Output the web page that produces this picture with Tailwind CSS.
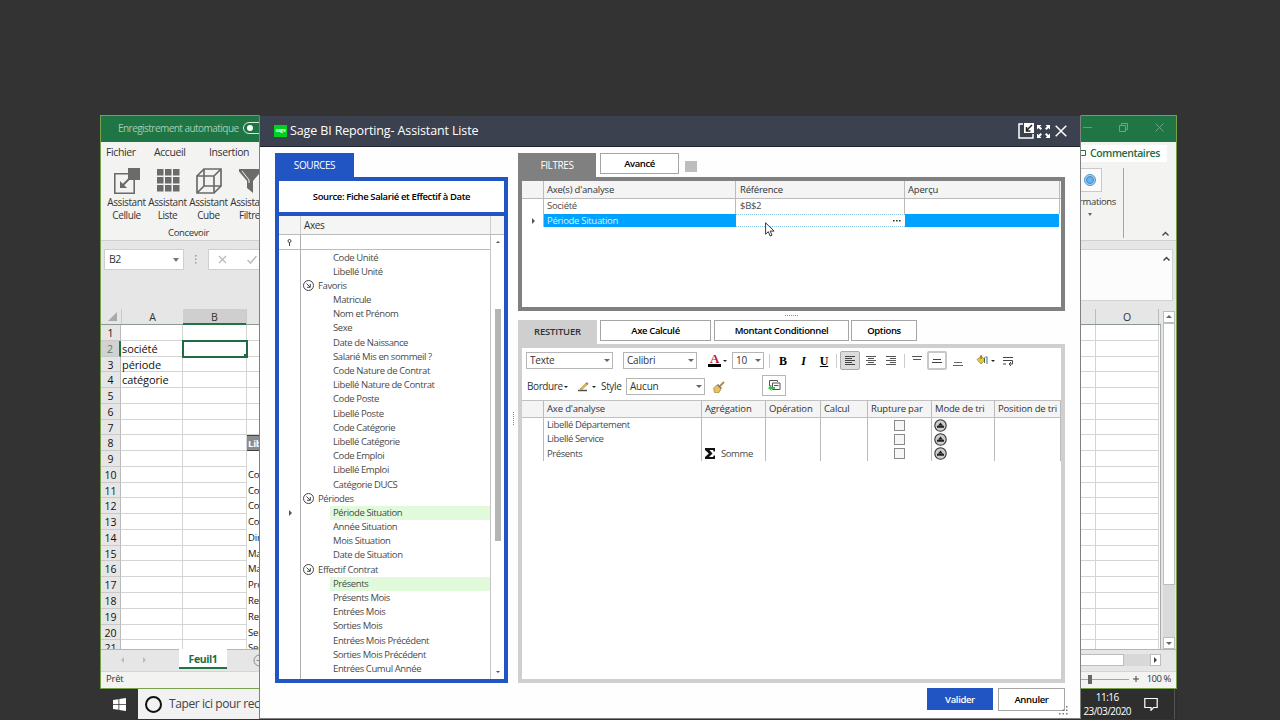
<!DOCTYPE html>
<html lang="fr">
<head>
    <meta charset="UTF-8">
    <meta name="viewport" content="width=device-width, initial-scale=1.0">
    <title>Sage BI Reporting - Assistant Liste</title>
    <script src="https://cdn.jsdelivr.net/npm/@tailwindcss/browser@4"></script>
</head>
<body class="relative w-[1280px] h-[720px] overflow-hidden bg-[#333333] font-['Open_Sans','Noto_Sans',sans-serif] text-[#333]">

    <!-- Excel window -->
    <div class="absolute left-[100px] top-[115px] w-[1077px] h-[574px] flex flex-col border border-[#79a04c] bg-[#e6e6e6] overflow-hidden">
        <!-- Title bar -->
        <div class="h-[26px] shrink-0 bg-[#1f7544] flex items-center justify-between pl-[17px] pr-[12px] pb-[3px] text-[#a5ccb3]">
            <div class="flex items-center gap-[5px]">
                <span class="w-[120px] text-[10px] tracking-[-0.54px] leading-none whitespace-nowrap">Enregistrement automatique</span>
                <span class="w-[26px] h-[12px] rounded-full border border-[#d5e8dc] flex items-center pl-[3px]"><span class="w-[6px] h-[6px] rounded-full bg-white"></span></span>
            </div>
            <div class="flex items-center gap-[27px]">
                <svg class="w-[9px] h-[9px]" viewBox="0 0 9 9" stroke="#5f9f79" fill="none"><path d="M0 4.500h9"/></svg>
                <svg class="w-[9px] h-[9px]" viewBox="0 0 9 9" stroke="#6aa884" fill="none"><path d="M.5 2.500h6v6h-6zM2.500 2.500v-2h6v6h-2"/></svg>
                <svg class="w-[9px] h-[9px]" viewBox="0 0 9 9" stroke="#6aa884" fill="none"><path d="M.5.5l8 8M8.500.5l-8 8"/></svg>
            </div>
        </div>
        <!-- Ribbon -->
        <div class="h-[99px] shrink-0 bg-[#f3f3f2] border-b border-[#cfcfcf] flex justify-between">
            <div class="flex flex-col">
                <div class="flex h-[25px] items-center pl-[5px] text-[10.5px] tracking-[-0.4px]">
                    <span class="w-[48px]">Fichier</span><span class="w-[55px]">Accueil</span><span>Insertion</span>
                </div>
                <div class="flex pt-[4px] pl-[5px] text-center text-[10px] leading-[12.5px] tracking-[-0.4px]">
                    <div class="w-[41px] flex flex-col items-center">
                        <svg class="w-[26px] h-[26px]" viewBox="0 0 26 26"><path d="M.8 5.800h19.400v19.400H.8z" fill="none" stroke="#6b6b6b" stroke-width="1.600"/><path d="M14 0h12v12H14z" fill="#6b6b6b"/><path d="M17 9L8 18" stroke="#6b6b6b" stroke-width="2"/><path d="M6 20v-7l7 7z" fill="#6b6b6b"/></svg>
                        <span class="mt-[2px] whitespace-nowrap">Assistant<br>Cellule</span>
                    </div>
                    <div class="w-[41px] flex flex-col items-center">
                        <svg class="w-[26px] h-[26px]" viewBox="0 0 26 26" fill="#6b6b6b"><path d="M2 1h6.500v6.500H2zM10 1h6.500v6.500H10zM18 1h6.500v6.500H18zM2 9h6.500v6.500H2zM10 9h6.500v6.500H10zM18 9h6.500v6.500H18zM2 17h6.500v6.500H2zM10 17h6.500v6.500H10zM18 17h6.500v6.500H18z"/></svg>
                        <span class="mt-[2px] whitespace-nowrap">Assistant<br>Liste</span>
                    </div>
                    <div class="w-[41px] flex flex-col items-center">
                        <svg class="w-[26px] h-[26px]" viewBox="0 0 26 26" fill="none" stroke="#6b6b6b" stroke-width="1.700"><path d="M1 8h17v17H1zM8 1h17v17H8zM1 8l7-7M18 8l7-7M1 25l7-7M18 25l7-7"/></svg>
                        <span class="mt-[2px] whitespace-nowrap">Assistant<br>Cube</span>
                    </div>
                    <div class="w-[41px] flex flex-col items-center">
                        <svg class="w-[26px] h-[26px]" viewBox="0 0 26 26" fill="#6b6b6b"><path d="M2 1h22v2.500L16 13v12l-6-5v-7L2 3.500z"/><path d="M5 3l7 9v3" stroke="#f3f3f2" fill="none"/></svg>
                        <span class="mt-[2px] whitespace-nowrap">Assistant<br>Filtre</span>
                    </div>
                </div>
                <span class="pl-[67px] mt-[5px] text-[9.5px] leading-[14px] tracking-[-0.35px]">Concevoir</span>
            </div>
            <div class="w-[96px] flex flex-col">
                <div class="w-[87px] h-[17px] mt-[3px] bg-white flex items-center gap-[3px]">
                    <svg class="w-[7px] h-[9px] shrink-0" viewBox="1 0 7 9" fill="none" stroke="#217346"><path d="M0 1.500h6.500v5h-4l-2 2"/></svg>
                    <span class="text-[10.5px] font-semibold tracking-[-0.4px] text-[#1f6b43]">Commentaires</span>
                </div>
                <div class="flex">
                    <div class="w-[44px] h-[70px] mt-[6px] border-r border-[#a5a5a5] flex flex-col">
                        <div class="w-[22px] h-[24px] bg-[#fbfbfb] border border-l-0 border-[#c8c8c8] flex items-center justify-center">
                            <svg class="w-[14px] h-[14px]" viewBox="0 0 14 14"><circle cx="6" cy="7" r="5.500" fill="#a9d3f5" stroke="#4b97d2"/><circle cx="6" cy="7" r="3.500" fill="#67b3ef" stroke="#4586bb"/></svg>
                        </div>
                        <span class="text-[9.5px] leading-[14px] mt-[3px] -ml-[1px] tracking-[-0.35px]">rmations</span>
                        <span class="border-x-[2.5px] border-x-transparent border-t-[3px] border-t-[#666] w-0 ml-[8px] mt-[4px]"></span>
                    </div>
                    <svg class="w-[7px] h-[5px] mt-[69px] ml-[38px]" viewBox="0 0 7 5" fill="none" stroke="#444" stroke-width="1.300"><path d="M.5 4.500l3-3 3 3"/></svg>
                </div>
            </div>
        </div>
        <!-- Formula bar -->
        <div class="h-[68px] shrink-0 flex pt-[8px] pl-[3px] pr-[3px]">
            <div class="w-[80px] h-[21px] bg-white border border-[#cfcfcf] flex items-center justify-between px-[4px] text-[10.5px]">
                <span class="tracking-[-0.5px]">B2</span>
                <span class="border-x-[3px] border-x-transparent border-t-[4px] border-t-[#777]"></span>
            </div>
            <div class="w-[24px] h-[21px] flex items-center justify-center"><svg class="w-[2px] h-[9px]" viewBox="0 0 2 9" fill="#999"><path d="M0 0h1.500v1.500H0zM0 3.500h1.500V5H0zM0 7h1.500v1.500H0z"/></svg></div>
            <div class="w-[180px] h-[21px] bg-white border border-[#cfcfcf] flex items-center gap-[20px] pl-[9px]">
                <svg class="w-[9px] h-[9px]" viewBox="0 0 9 9" stroke="#bbb" stroke-width="1.300"><path d="M1 1l7 7M8 1l-7 7"/></svg>
                <svg class="w-[10px] h-[9px]" viewBox="0 0 10 9" stroke="#bbb" stroke-width="1.500" fill="none"><path d="M.5 5l3 3L9.500 1"/></svg>
            </div>
            <div class="ml-auto w-[200px] h-[52px] bg-[#fcfcfc] border border-[#d2d2d2] flex justify-end pr-[2px] pt-[6px]">
                <svg class="w-[7px] h-[5px]" viewBox="0 0 7 5" fill="none" stroke="#444" stroke-width="1.500"><path d="M.5 4.500l3-3 3 3"/></svg>
            </div>
        </div>
        <!-- Sheet -->
        <div class="h-[340px] shrink-0 flex">
            <div class="w-[1060px] flex flex-col overflow-hidden">
                <div class="h-[16px] shrink-0 flex border-b border-[#8a9a90] text-[10.5px] text-center leading-[16px]">
                    <div class="w-[20px] flex items-end justify-end pb-[3px] pr-[4px]"><svg class="w-[9px] h-[9px]" viewBox="0 0 9 9" fill="#aaa"><path d="M9 0v9H0z"/></svg></div>
                    <div class="w-[62px] border-l border-[#c9c9c9]">A</div>
                    <div class="w-[63px] h-[16px] bg-[#cfcfcf] border-b-2 border-[#217346]">B</div>
                    <div class="w-[849px] border-l border-[#c9c9c9]"></div>
                    <div class="w-[64px] border-x border-[#bbb]">O</div>
                </div>
                <div id="sheet" class="flex flex-col bg-white border-r border-[#aaa]"></div>
            </div>
            <div class="w-[15px] flex flex-col items-center pt-[2px]">
                <div class="w-[12px] h-[12px] bg-white border border-[#bdbdbd] flex items-center justify-center"><span class="border-x-[3px] border-x-transparent border-b-[3px] border-b-[#666]"></span></div>
                <div class="w-[12px] h-[263px] bg-white border border-[#bdbdbd]"></div>
                <div class="w-[12px] h-[52px] bg-[#dadada]"></div>
                <div class="w-[12px] h-[12px] bg-white border border-[#bdbdbd] flex items-center justify-center"><span class="border-x-[3px] border-x-transparent border-t-[3px] border-t-[#666]"></span></div>
            </div>
        </div>
        <!-- Sheet tabs -->
        <div class="h-[22px] shrink-0 flex items-start border-t border-[#b5b5b5] bg-[#e6e6e6]">
            <div class="w-[78px] h-[20px] flex items-center pl-[20px] gap-[19px]">
                <span class="border-y-[3px] border-y-transparent border-r-[3px] border-r-[#bbb]"></span>
                <span class="border-y-[3px] border-y-transparent border-l-[3px] border-l-[#bbb]"></span>
            </div>
            <div class="w-[48px] h-[20px] -mt-px bg-white border-b-2 border-[#217346] text-center text-[10.5px] leading-[20px] font-bold tracking-[-0.4px] text-[#1f6b43]">Feuil1</div>
            <svg class="w-[13px] h-[13px] ml-[26px] mt-[4px]" viewBox="0 0 13 13" fill="none" stroke="#888"><circle cx="6.500" cy="6.500" r="5.500"/><path d="M6.500 3.500v6M3.500 6.500h6"/></svg>
            <div class="ml-auto mr-[15px] mt-[4px] h-[12px] flex">
                <div class="w-[143px] bg-white border border-[#bdbdbd]"></div>
                <div class="w-[26px] bg-[#d8d8d8]"></div>
                <div class="w-[11px] bg-white border border-[#bdbdbd] flex items-center justify-center"><span class="border-y-[3px] border-y-transparent border-l-[3px] border-l-[#444]"></span></div>
            </div>
        </div>
        <!-- Status bar -->
        <div class="grow bg-[#f3f3f2] border-t border-[#d4d4d4] flex items-center justify-between pl-[5px] pr-[5px] pb-[2px] text-[9.5px]">
            <span class="tracking-[-0.2px]">Prêt</span>
            <div class="flex items-center">
                <div class="w-[60px] h-px bg-[#a5a5a5] flex items-center"><span class="w-[4px] h-[9px] ml-[19px] bg-[#666]"></span></div>
                <svg class="w-[6px] h-[6px] ml-[4px]" viewBox="0 0 6 6" stroke="#444"><path d="M3 0v6M0 3h6"/></svg>
                <span class="ml-[8px] tracking-[-0.45px]">100 %</span>
            </div>
        </div>
    </div>

    <!-- Windows taskbar -->
    <div class="absolute left-[100px] top-[689px] w-[1077px] h-[30px] bg-[#2e2e2e] flex justify-between">
        <div class="flex">
            <div class="w-[38px] bg-[#333] flex items-center justify-center">
                <svg class="w-[13px] h-[13px]" viewBox="0 0 13 13" fill="#fff"><path d="M0 2l5.500-.8V6H0zM6.300 1L13 0v6H6.300zM0 6.800h5.500v4.900L0 11zM6.300 6.800H13V13l-6.700-1z"/></svg>
            </div>
            <div class="w-[200px] bg-[#f2f2f2] flex items-center pl-[7px] gap-[7px]">
                <span class="w-[17px] h-[17px] rounded-full border-[2.5px] border-[#111]"></span>
                <span class="text-[12px] tracking-[-0.4px] whitespace-nowrap text-[#444]">Taper ici pour rechercher</span>
            </div>
        </div>
        <div class="flex items-center pr-[2px] text-white">
            <div class="text-[10px] leading-[14px] text-center tracking-[-0.55px]">11:16<br>23/03/2020</div>
            <svg class="w-[14px] h-[14px] ml-[13px] mr-[16px]" viewBox="0 0 14 14" fill="none" stroke="#fff" stroke-width="1.200"><path d="M.8 1.500h12.400v9H9.500l-2.500 2.800v-2.800H.8z"/></svg>
            <span class="w-px h-full bg-[#555]"></span>
        </div>
    </div>

    <!-- Assistant dialog -->
    <div class="absolute left-[259px] top-[115px] w-[822px] h-[604px] flex flex-col border border-[#808080] border-t-[#333] bg-[#fefefe]">
        <div class="h-[31px] shrink-0 bg-[#3b414f] border-b border-[#20222c] flex items-center pl-[14px] pr-[13px] text-white">
            <span class="w-[13px] h-[12px] bg-[#00d01f] text-[5px] leading-[10px] text-center font-semibold tracking-[-0.2px]">sage</span>
            <span class="ml-[3px] text-[12.5px] leading-none tracking-[-0.13px]">Sage BI Reporting- Assistant Liste</span>
            <div class="ml-auto flex items-center gap-[2px]">
                <svg class="w-[16px] h-[16px]" viewBox="0 0 16 16"><path d="M5 1H1v14h14v-4" fill="none" stroke="#fff" stroke-width="1.500"/><path d="M6 0h10v10H6z" fill="#fff"/><path d="M14 2L9 7M8.500 4v4h4" fill="none" stroke="#222" stroke-width="1.500"/></svg>
                <svg class="w-[15px] h-[15px]" viewBox="0 0 15 15" fill="#fff"><path d="M1 1h4.500L4 2.500l2 2L4.500 6l-2-2L1 5.500zM14 1H9.500L11 2.500l-2 2L10.500 6l2-2L14 5.500zM1 14h4.500L4 12.500l2-2L4.500 9l-2 2L1 9.500zM14 14H9.500l1.500-1.500-2-2L10.500 9l2 2L14 9.500z"/></svg>
                <svg class="w-[12px] h-[12px] ml-[2px]" viewBox="0 0 12 12" stroke="#fff" stroke-width="1.500"><path d="M.7.7l10.600 10.600M11.300.7L.7 11.300"/></svg>
            </div>
        </div>

        <div class="flex pt-[6px] pl-[15px] pr-[15px]">
            <!-- Sources -->
            <div class="w-[233px] flex flex-col">
                <div class="w-[79px] h-[24px] bg-[#2255c4] text-white text-center text-[10px] leading-[24px] tracking-[-0.4px]">SOURCES</div>
                <div class="h-[506px] border-4 border-[#2255c4] bg-[#2255c4] flex flex-col gap-[4px]">
                    <div class="h-[31px] shrink-0 bg-white text-black text-center text-[9.5px] leading-[31px] font-semibold tracking-[-0.38px]">Source: Fiche Salarié et Effectif à Date</div>
                    <div class="h-[463px] bg-white flex flex-col">
                        <div class="h-[19px] shrink-0 bg-[#f5f5f6] border-b border-[#bbb] flex text-[10px] leading-[18px]">
                            <span class="w-[22px] border-r border-[#ccc]"></span>
                            <span class="w-[190px] pl-[3px] border-r border-[#ccc] tracking-[-0.4px]">Axes</span>
                        </div>
                        <div class="flex grow">
                            <div class="w-[22px] border-r border-[#b0b0b0] flex flex-col items-center">
                                <div class="h-[15px] w-full border-b border-[#bbb] flex items-center justify-center"><svg class="w-[5px] h-[7px]" viewBox="0 0 5 7"><circle cx="2.500" cy="2" r="1.500" fill="none" stroke="#444"/><path d="M2.500 3.500V7" stroke="#444"/></svg></div>
                                <span class="mt-[260px] ml-[2px] border-y-[3px] border-y-transparent border-l-[3px] border-l-[#555]"></span>
                            </div>
                            <div class="w-[190px] border-r border-[#c5c5c5]">
                                <div class="h-[15px] border-b border-[#bbb]"></div>
                                <div id="axes" class="pt-[0.5px] text-[9.5px] leading-[14px] tracking-[-0.4px] text-[#4a4a4a]"></div>
                            </div>
                            <div class="grow flex flex-col items-center justify-between py-[6px]">
                                <span class="border-x-[2px] border-x-transparent border-b-[2px] border-b-[#555]"></span>
                                <span class="w-[6px] h-[232px] mb-[64px] bg-[#b5b5b5]"></span>
                                <span class="border-x-[2px] border-x-transparent border-t-[2px] border-t-[#555]"></span>
                            </div>
                        </div>
                    </div>
                </div>
            </div>

            <div class="w-[10px] flex justify-center"><span class="mt-[259px] h-[13px] border-l border-dotted border-[#888]"></span></div>

            <div class="w-[547px] flex flex-col">
                <!-- Filtres -->
                <div class="h-[24px] flex text-[10px] tracking-[-0.4px] text-center">
                    <div class="w-[78px] bg-[#808080] text-white leading-[24px]">FILTRES</div>
                    <div class="w-[79px] h-[21px] ml-[4px] border border-[#a5a5a5] bg-white text-black font-semibold leading-[19px] text-[9.5px]">Avancé</div>
                    <div class="w-[12px] h-[11px] ml-[6px] mt-[8px] bg-[#bdbdbd]"></div>
                </div>
                <div class="h-[134px] shrink-0 border-4 border-[#808080] bg-white text-[9.5px] tracking-[-0.3px]">
                    <div class="h-[18px] bg-[#f4f4f4] border-b border-[#bbb] flex leading-[17px] text-[#333] tracking-[-0.2px]">
                        <span class="w-[22px] border-r border-[#bbb]"></span>
                        <span class="w-[192px] pl-[3px] border-r border-[#bbb]">Axe(s) d'analyse</span>
                        <span class="w-[169px] pl-[4px] border-r border-[#bbb]">Référence</span>
                        <span class="w-[155px] pl-[3px] border-r border-[#bbb]">Aperçu</span>
                    </div>
                    <div class="h-[15px] flex leading-[14px] text-[#4a4a4a]">
                        <span class="w-[22px] border-r border-[#bbb]"></span>
                        <span class="w-[192px] pl-[3px] border-r border-[#bbb]">Société</span>
                        <span class="w-[169px] pl-[4px] border-r border-[#bbb]">$B$2</span>
                        <span class="w-[155px] border-r border-[#bbb]"></span>
                    </div>
                    <div class="h-[13px] flex leading-[13px] text-[#d8f0ff]">
                        <span class="w-[22px] border-r border-[#bbb] flex items-center justify-center pl-[2px]"><span class="border-y-[3px] border-y-transparent border-l-[3px] border-l-[#555]"></span></span>
                        <span class="w-[192px] pl-[3px] bg-[#00a2ff]">Période Situation</span>
                        <span class="w-[169px] border-y border-dotted border-[#8cc4e6] flex items-center justify-end pr-[4px]"><svg class="w-[8px] h-[2px]" viewBox="0 0 8 2" fill="#333"><path d="M0 0h1.600v1.600H0zM3 0h1.600v1.600H3zM6 0h1.600v1.600H6z"/></svg></span>
                        <span class="w-[154px] bg-[#00a2ff]"></span>
                    </div>
                </div>
                <div class="h-[9px] shrink-0 flex justify-center"><span class="mt-[4px] w-[13px] border-t border-dotted border-[#888]"></span></div>

                <!-- Restituer -->
                <div class="h-[24px] flex gap-[3px] text-[9.5px] leading-[19px] tracking-[-0.36px] text-center text-black font-semibold">
                    <div class="w-[79px] bg-[#cfcfcf] leading-[24px] text-[#333] tracking-[-0.2px]">RESTITUER</div>
                    <div class="w-[111px] h-[21px] border border-[#a5a5a5] bg-white">Axe Calculé</div>
                    <div class="w-[135px] h-[21px] border border-[#a5a5a5] bg-white">Montant Conditionnel</div>
                    <div class="w-[66px] h-[21px] -ml-px border border-[#a5a5a5] bg-white">Options</div>
                </div>
                <div class="h-[339px] shrink-0 border-4 border-[#cfcfcf] bg-white text-[10px] tracking-[-0.2px]">
                    <div class="h-[25px] flex items-center pl-[4px]">
                        <div class="w-[87px] h-[17px] border border-[#b5b5b5] flex items-center justify-between pl-[3px] pr-[2px]">Texte<span class="border-x-[3px] border-x-transparent border-t-[3px] border-t-[#666]"></span></div>
                        <div class="w-[74px] h-[17px] ml-[10px] border border-[#b5b5b5] flex items-center justify-between pl-[3px] pr-[2px]">Calibri<span class="border-x-[3px] border-x-transparent border-t-[3px] border-t-[#666]"></span></div>
                        <div class="w-[13px] ml-[11px] border-b-[3px] border-black text-center font-['Liberation_Serif',serif] font-bold text-[13px] leading-[10px] text-[#b02a3a]">A</div>
                        <span class="ml-[2px] border-x-[2px] border-x-transparent border-t-[2px] border-t-[#222]"></span>
                        <div class="w-[32px] h-[17px] ml-[5px] border border-[#b5b5b5] flex items-center justify-between pl-[3px] pr-[2px]">10<span class="border-x-[3px] border-x-transparent border-t-[3px] border-t-[#666]"></span></div>
                        <span class="w-px h-[14px] ml-[5px] bg-[#ccc]"></span>
                        <div class="flex ml-[3px] text-center font-['Liberation_Serif',serif] font-bold text-[12px] text-black">
                            <span class="w-[20px]">B</span><span class="w-[21px] italic">I</span><span class="w-[20px] underline">U</span>
                        </div>
                        <span class="w-px h-[14px] ml-[2px] bg-[#ccc]"></span>
                        <span class="w-[20px] h-[19px] ml-[3px] rounded-[2px] border border-[#aaa] bg-[#dcdcdc] flex items-center justify-center"><svg class="w-[10px] h-[9px]" viewBox="0 0 10 9" stroke="#444"><path d="M0 .5h10M0 2.500h7M0 4.500h10M0 6.500h7M0 8.500h10"/></svg></span>
                        <svg class="w-[10px] h-[9px] ml-[6px]" viewBox="0 0 10 9" stroke="#555"><path d="M0 .5h10M2 2.500h6M0 4.500h10M2 6.500h6M0 8.500h10"/></svg>
                        <svg class="w-[10px] h-[9px] ml-[10px]" viewBox="0 0 10 9" stroke="#555"><path d="M0 .5h10M4 2.500h6M0 4.500h10M4 6.500h6M0 8.500h10"/></svg>
                        <span class="w-px h-[14px] ml-[8px] bg-[#ccc]"></span>
                        <svg class="w-[10px] h-[4px] ml-[7px] mb-[6px]" viewBox="0 0 10 4" stroke="#555"><path d="M0 .5h10M1 3.500h8"/></svg>
                        <span class="w-[20px] h-[19px] ml-[5px] rounded-[2px] border-2 border-[#c8c8c8] bg-white flex items-center justify-center"><svg class="w-[10px] h-[4px]" viewBox="0 0 10 4" stroke="#444"><path d="M1 .5h8M0 3.500h10"/></svg></span>
                        <svg class="w-[10px] h-[4px] ml-[6px] mt-[6px]" viewBox="0 0 10 4" stroke="#666"><path d="M1 .5h8M0 3.500h10"/></svg>
                        <svg class="w-[13px] h-[11px] ml-[13px]" viewBox="0 0 13 11"><path d="M1 4.500L5.500 1 9 5 5 9z" fill="#e8c63c" stroke="#9a7d22" stroke-width=".7"/><path d="M5 0v4M8.500 2.500v5.500" stroke="#3f5a3a" stroke-width=".9"/><path d="M9 2h2v7" fill="none" stroke="#5b82b5" stroke-width="1.200"/></svg>
                        <span class="ml-[2px] border-x-[2px] border-x-transparent border-t-[2px] border-t-[#222]"></span>
                        <svg class="w-[11px] h-[10px] ml-[8px]" viewBox="0 0 11 10" fill="none" stroke="#444"><path d="M0 1.500h10M0 4.500h9.500v3.500H6M0 8h3M8 6L6 8l2 2"/></svg>
                    </div>
                    <div class="h-[27px] flex items-center pl-[5px]">
                        <span class="w-[34px] tracking-[-0.4px]">Bordure</span>
                        <span class="ml-[3px] border-x-[2px] border-x-transparent border-t-[2px] border-t-[#222]"></span>
                        <svg class="w-[11px] h-[10px] ml-[10px]" viewBox="0 0 11 10"><path d="M2 7l6-6 1.500 1.500-6 5.500z" fill="#d9c545" stroke="#a07830" stroke-width=".5"/><path d="M7.500 1.500L9 0l1.500 1.500L9.200 3z" fill="#d66"/><path d="M0 8.500h9" stroke="#555" stroke-width="1.500"/></svg>
                        <span class="ml-[3px] border-x-[2px] border-x-transparent border-t-[2px] border-t-[#222]"></span>
                        <span class="w-[21px] ml-[5px] tracking-[-0.35px]">Style</span>
                        <div class="w-[79px] h-[17px] ml-[4px] border border-[#b5b5b5] flex items-center justify-between pl-[3px] pr-[2px]">Aucun<span class="border-x-[3px] border-x-transparent border-t-[3px] border-t-[#666]"></span></div>
                        <svg class="w-[12px] h-[12px] ml-[8px]" viewBox="0 0 12 12"><path d="M7 5l4-4" stroke="#b28a52" stroke-width="2"/><path d="M4 4l4 4-2 3.500H1.500L.5 7z" fill="#e5c45d" stroke="#a68238" stroke-width=".7"/><path d="M4.500 3.500l4 4" stroke="#777" stroke-width="1.500"/></svg>
                        <span class="w-[24px] h-[21px] ml-[37px] mb-[2px] border border-[#b5b5b5] flex items-center justify-center"><svg class="w-[13px] h-[13px]" viewBox="0 0 13 13" fill="none"><path d="M3 7H1.500V1.500h8V3M4.500 4h7.500v6.500H4.500z" stroke="#555"/><path d="M6 6.500h4.500" stroke="#555"/><path d="M0 9l3.500-3v2H7v2H3.500v2z" fill="#3cc24b"/></svg></span>
                    </div>
                    <div class="h-[18px] border-y border-[#c0c0c0] bg-[#f4f4f4] flex leading-[16px] text-[9.5px] text-[#333] tracking-[-0.16px] whitespace-nowrap">
                        <span class="w-[22px] border-r border-[#bbb]"></span>
                        <span class="w-[158px] pl-[3px] border-r border-[#bbb]">Axe d'analyse</span>
                        <span class="w-[64px] pl-[3px] border-r border-[#bbb]">Agrégation</span>
                        <span class="w-[55px] pl-[3px] border-r border-[#bbb]">Opération</span>
                        <span class="w-[47px] pl-[3px] border-r border-[#bbb]">Calcul</span>
                        <span class="w-[64px] pl-[3px] border-r border-[#bbb]">Rupture par</span>
                        <span class="w-[63px] pl-[3px] border-r border-[#bbb]">Mode de tri</span>
                        <span class="w-[66px] pl-[3px] border-r border-[#bbb]">Position de tri</span>
                    </div>
                    <div id="restit" class="text-[9.5px] leading-[14px] text-[#4a4a4a] tracking-[-0.4px]"></div>
                </div>
            </div>
        </div>

        <!-- Dialog buttons -->
        <div class="flex justify-end gap-[5px] pt-[5px] pr-[15px] text-[9.5px] text-center leading-[23px] font-semibold tracking-[-0.35px]">
            <div class="w-[66px] h-[22px] bg-[#2255c4] text-white">Valider</div>
            <div class="w-[67px] h-[23px] bg-white border border-[#a5a5a5] text-black leading-[21px]">Annuler</div>
        </div>
        <svg class="absolute right-[12px] bottom-[3px] w-[9px] h-[9px]" viewBox="0 0 9 9" fill="#777"><path d="M7 0h1.500v1.500H7zM3.500 3.500H5V5H3.500zM7 3.500h1.500V5H7zM0 7h1.500v1.500H0zM3.500 7H5v1.500H3.500zM7 7h1.500v1.500H7z"/></svg>
    </div>

    <!-- Mouse pointer -->
    <svg class="absolute left-[765px] top-[222px] w-[10px] h-[15px]" viewBox="0 0 10 15"><path d="M.6.8v11.400l2.700-2.500 1.800 4.300 1.900-.8-1.800-4.100h3.900z" fill="#fff" stroke="#222" stroke-width=".9"/></svg>

    <script>
        // axis tree: "#" opens a group, "*" marks an axis already in use
        const axes = ["Code Unité", "Libellé Unité", "#Favoris", "Matricule", "Nom et Prénom", "Sexe", "Date de Naissance",
            "Salarié Mis en sommeil ?", "Code Nature de Contrat", "Libellé Nature de Contrat", "Code Poste", "Libellé Poste",
            "Code Catégorie", "Libellé Catégorie", "Code Emploi", "Libellé Emploi", "Catégorie DUCS", "#Périodes",
            "*Période Situation", "Année Situation", "Mois Situation", "Date de Situation", "#Effectif Contrat", "*Présents",
            "Présents Mois", "Entrées Mois", "Sorties Mois", "Entrées Mois Précédent", "Sorties Mois Précédent", "Entrées Cumul Année"];
        const arrow = '<svg class="w-[11px] h-[11px]" viewBox="0 0 11 11" fill="none" stroke="#444"><circle cx="5.500" cy="5.500" r="5"/><path d="M3.500 3.500l3.500 3.500M7.300 4v3.300H4"/></svg>';
        document.getElementById("axes").innerHTML = axes.map(a => {
            if (a[0] === "#") return `<div class="h-[14.19px] flex items-center gap-[4px] pl-[2px]">${arrow}<span>${a.slice(1)}</span></div>`;
            if (a[0] === "*") return `<div class="h-[14.19px] ml-[29px] pl-[3px] bg-[#e0fadb]">${a.slice(1)}</div>`;
            return `<div class="h-[14.19px] pl-[32px]">${a}</div>`;
        }).join("");

        // spreadsheet rows
        const colA = { 2: "société", 3: "période", 4: "catégorie" };
        const colC = { 8: "Lib", 10: "Co", 11: "Co", 12: "Co", 13: "Co", 14: "Dir", 15: "Ma", 16: "Ma", 17: "Pro", 18: "Res", 19: "Res", 20: "Ser", 21: "Ser" };
        let rows = "";
        for (let i = 1; i <= 21; i++) {
            const head = i === 2 ? "bg-[#d2d2d2] border-r-2 border-r-[#217346] text-[#5f7a6a]" : "bg-[#e6e6e6] border-r border-r-[#bbb]";
            const b = i === 2 ? "relative outline-2 outline-[#1f6b43] -outline-offset-1" : "";
            const handle = i === 2 ? '<span class="absolute -right-[2px] -bottom-[2px] w-[4px] h-[4px] bg-[#1f6b43]"></span>' : "";
            const c = i === 8 ? "bg-[#8c8c8c] text-white font-bold border-y border-y-[#444]" : i >= 9 ? "" : "border-b border-b-[#d4d4d4]";
            rows += `<div class="h-[15.77px] shrink-0 flex text-[10.5px] leading-[16px] tracking-[-0.1px] text-[#111]">
                <span class="w-[20px] text-center border-b border-b-[#c9c9c9] ${head}">${i}</span>
                <span class="w-[62px] pl-[1px] text-[11px] border-b border-r border-[#d4d4d4]">${colA[i] || ""}</span>
                <span class="w-[64px] border-b border-r border-[#d4d4d4] ${b}">${handle}</span>
                <span class="w-[830px] pl-[1px] text-[9.5px] tracking-[-0.2px] ${c}">${colC[i] || ""}</span>
                <span class="w-[18px] border-b border-[#d4d4d4]"></span>
                <span class="w-[64px] border-b border-x border-[#d4d4d4]"></span>
            </div>`;
        }
        document.getElementById("sheet").innerHTML = rows;

        const tri = '<svg class="w-[13px] h-[13px]" viewBox="0 0 13 13"><circle cx="6.500" cy="6.500" r="5.700" fill="#ccc" stroke="#333" stroke-width="1.100"/><path d="M6.500 3.500L9 6.500H4zM3 6.800h7v2H3z" fill="#222"/></svg>';
        const sigma = '<svg class="w-[10px] h-[11px]" viewBox="0 0 10 11" fill="#111"><path d="M0 0h10v3.500H8.800L8 2H4.500l3 3.500-3.500 3.500h4l.8-1.500H10V11H0V9l3.800-3.500L0 2z"/></svg>';
        document.getElementById("restit").innerHTML = ["Libellé Département", "Libellé Service", "Présents"].map(t => `<div class="h-[14.3px] flex">
            <span class="w-[22px] border-r border-[#bbb]"></span>
            <span class="w-[158px] pl-[3px] border-r border-[#bbb]">${t}</span>
            <span class="w-[64px] pl-[3px] border-r border-[#bbb] flex items-center gap-[6px] tracking-[-0.4px]">${t === "Présents" ? sigma + "Somme" : ""}</span>
            <span class="w-[55px] border-r border-[#bbb]"></span>
            <span class="w-[47px] border-r border-[#bbb]"></span>
            <span class="w-[64px] border-r border-[#bbb] flex items-center justify-center"><span class="w-[11px] h-[11px] border border-[#8a8a8a] bg-[#f6f6f6]"></span></span>
            <span class="w-[63px] border-r border-[#bbb] flex items-center pl-[2px]">${tri}</span>
            <span class="w-[66px] border-r border-[#bbb]"></span>
        </div>`).join("");
    </script>
</body>
</html>
